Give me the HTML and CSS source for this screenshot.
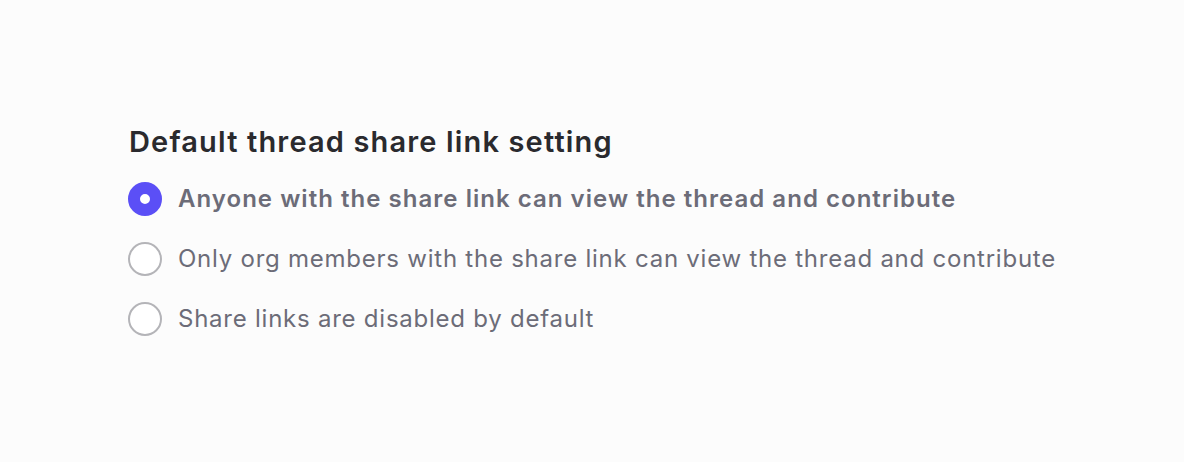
FILE: index.html
```html
<!DOCTYPE html>
<html>
<head>
<meta charset="utf-8">
<link rel="stylesheet" href="styles.css">
</head>
<body>
<div class="page">
  <section class="setting">
    <h2 class="title">Default thread share link setting</h2>
    <div class="options">
      <label class="option selected">
        <span class="radio checked"></span>
        <span class="label">Anyone with the share link can view the thread and contribute</span>
      </label>
      <label class="option">
        <span class="radio"></span>
        <span class="label">Only org members with the share link can view the thread and contribute</span>
      </label>
      <label class="option">
        <span class="radio"></span>
        <span class="label">Share links are disabled by default</span>
      </label>
    </div>
  </section>
</div>
</body>
</html>
```

FILE: styles.css
```css
html, body {
  margin: 0;
  padding: 0;
  background: #fcfcfc;
}
body {
  font-family: Inter, "Noto Sans", sans-serif;
  width: 1184px;
  height: 462px;
  overflow: hidden;
}
.page {
  padding: 122px 0 0 129px;
}
.title {
  margin: 0;
  font-size: 29px;
  font-weight: 600;
  color: #2a2a2e;
  line-height: 40px;
  letter-spacing: 1.15px;
}
.options {
  display: flex;
  flex-direction: column;
  gap: 26px;
  margin-top: 20px;
}
.option {
  display: flex;
  align-items: center;
  gap: 16px;
  height: 34px;
  margin-left: -1px;
}
.radio {
  box-sizing: border-box;
  width: 34px;
  height: 34px;
  border-radius: 50%;
  border: 2px solid #b4b4b8;
  background: #fff;
  flex: none;
}
.radio.checked {
  border: 12px solid #5b4ff6;
  background: #fff;
}
.label {
  font-size: 24px;
  color: #6c6c78;
  line-height: 34px;
  letter-spacing: 0.76px;
}
.selected .label {
  font-weight: 600;
  letter-spacing: 1.03px;
}
```
